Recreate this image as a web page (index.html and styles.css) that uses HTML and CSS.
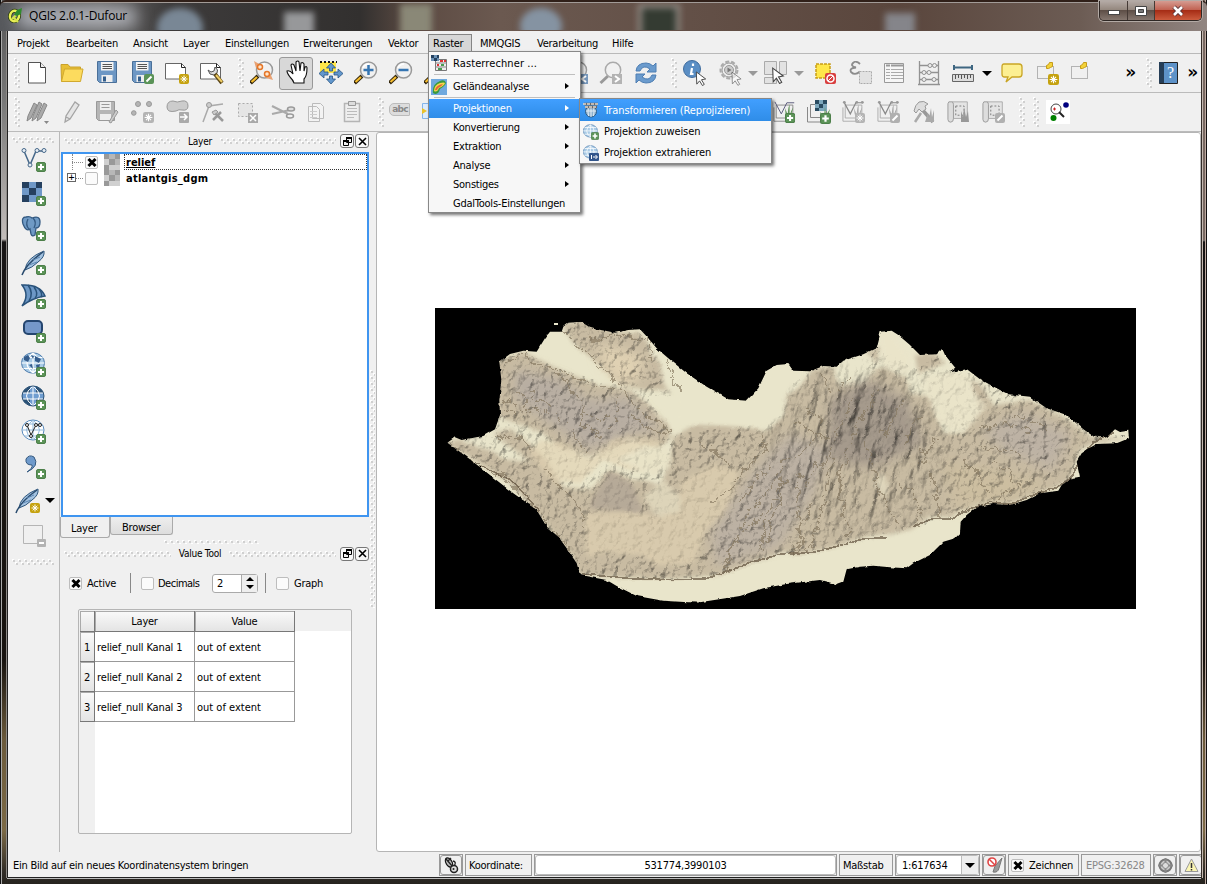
FILE: index.html
```html
<!DOCTYPE html>
<html lang="de">
<head>
<meta charset="utf-8">
<title>QGIS 2.0.1-Dufour</title>
<link rel="stylesheet" href="styles.css">
</head>
<body>
<svg class="defs" width="0" height="0" aria-hidden="true">
  <defs>
    <pattern id="dots-v" width="6" height="6" patternUnits="userSpaceOnUse"><path d="M0 0h2v2H0zM3 3h2v2H3z" fill="#fff"/><path d="M1 1h2v2H1zM4 4h2v2H4z" fill="#d0d0d0"/></pattern>
    <symbol id="plus" viewBox="0 0 10 10"><rect x=".5" y=".5" width="9" height="9" rx="1.5" fill="#5c9458" stroke="#4d7f4a"/><path d="M5 2v6M2 5h6" stroke="#fff" stroke-width="2"/></symbol>
    <symbol id="star" viewBox="0 0 10 10"><rect width="10" height="10" rx="2" fill="#c5a20f"/><path d="M5 1.500v7M1.500 5h7M2.700 2.700l4.600 4.600M7.300 2.700L2.700 7.300" stroke="#fff"/></symbol>
    <symbol id="star-g" viewBox="0 0 10 10"><rect width="10" height="10" rx="2" fill="#b4b4b4"/><path d="M5 1.500v7M1.500 5h7M2.700 2.700l4.600 4.600M7.300 2.700L2.700 7.300" stroke="#fff"/></symbol>
    <symbol id="pen-g" viewBox="0 0 10 10"><rect width="10" height="10" rx="2" fill="#b0b0b0"/><path d="M2.500 7.500l5-5" stroke="#fff" stroke-width="2"/></symbol>
    <symbol id="page" viewBox="0 0 24 24"><path d="M3.500 1.500h12l5 5v15.500h-17z" fill="#fff" stroke="#555"/><path d="M15.500 1.500v5h5" fill="#eee" stroke="#333"/></symbol>
    <symbol id="folder" viewBox="0 0 24 24"><path d="M1.500 20.500l-.5-17h7l2 2.500h10.500v3" fill="#e8bf35" stroke="#caa22c"/><path d="M1.500 20.500l3-12.500h18.500l-2.500 12.500z" fill="#fcdb5e" stroke="#d1a92e"/></symbol>
    <symbol id="disk" viewBox="0 0 24 24"><path d="M1.500.500h19v21h-17l-2-2z" fill="#6d97c4" stroke="#4a7099"/><path d="M5 1h12.500v8.500H5z" fill="#f4f4f4"/><path d="M6.500 3.500h9.500M6.500 5.500h9.500M6.500 7.500h9.500" stroke="#555"/><path d="M5.500 14h11v7h-11z" fill="#eee"/><path d="M7 15.500h3v5H7z" fill="#345f8d"/></symbol>
    <symbol id="disk-g" viewBox="0 0 24 24"><path d="M1.500 1.500h18v19h-16l-2-2z" fill="#b5b5b5" stroke="#999"/><path d="M5 2h11v8H5zM5 14h11v6H5z" fill="#eee"/><path d="M6.500 4.500h8M6.500 7.500h8" stroke="#999"/><path d="M14 22l7-12 2 2-7 11z" fill="#ccc" stroke="#999"/></symbol>
    <symbol id="layout" viewBox="0 0 26 24"><path d="M1.500 2.500h16l4 4v11.500h-20z" fill="#fff" stroke="#666"/><path d="M17.500 2.500v4h4" fill="none" stroke="#222"/></symbol>
    <symbol id="lens" viewBox="0 0 24 24"><path d="M.5 22L8 15" stroke="#30240c" stroke-width="4"/><path d="M1.500 21L7 16" stroke="#f6bd2e" stroke-width="2.200"/><circle cx="14.500" cy="9" r="8" fill="#f1f1f1" stroke="#999" stroke-width="1.500"/><path d="M9 7q2-4 6-4" fill="none" stroke="#fff" stroke-width="1.500"/></symbol>
    <symbol id="lens-g" viewBox="0 0 24 24"><path d="M1.500 22L9 15" stroke="#999" stroke-width="3"/><circle cx="14" cy="9" r="7.700" fill="#f1f1f1" stroke="#aaa" stroke-width="1.500"/></symbol>
    <symbol id="arrow4" viewBox="0 0 24 24"><path d="M12 2l4.500 5h-3v3h-3V7h-3zM12 23l-4.500-5h3v-3h3v3h3zM0 12.500L5 8v3h4v3H5v3zM24 12.500L19 8v3h-4v3h4v3z" fill="#6297cd" stroke="#285583" stroke-width=".8"/></symbol>
    <symbol id="cursor" viewBox="0 0 12 16"><path d="M1 1l10 7.500-4.500.8 3 5-2 1.200-3-5L1.500 14z" fill="#fff" stroke="#444"/></symbol>
    <symbol id="feather" viewBox="0 0 26 26"><path d="M4 20Q5 8 23 1q1 6-6 11-6 6-13 8z" fill="#a3c2e0" stroke="#30577d"/><path d="M1 25Q5 14 22 2" stroke="#294b6e" fill="none" stroke-width="1.500"/><path d="M8 15l8-3M12 10l7-3" stroke="#5b86b3"/></symbol>
    <symbol id="globe" viewBox="0 0 26 24"><ellipse cx="12" cy="11" rx="11.500" ry="10.200" fill="#a9cbe6" stroke="#4e7cac"/><path d="M.5 11h23M2.500 5.500h19M2.500 16.500h19M12 1v20M12 1Q0 11 12 21M12 1Q24 11 12 21" stroke="#fff" fill="none" stroke-width="1.200"/></symbol>
    <symbol id="vmap" viewBox="0 0 26 26"><path d="M1 8v15h15M3.500 5.500h18v14h-18z" stroke="#888" fill="none"/><path d="M2 2l7 13 6-12h8" stroke="#557" fill="none"/><path d="M15 20q-2-7-2-11 2 4 3 8 0-8 2-12v12q2-7 4-9-2 6-3 12z" fill="#5e9256"/><use href="#plus" x="13" y="14" width="11" height="11"/></symbol>
    <symbol id="vmap-g" viewBox="0 0 26 26"><path d="M1 8v15h15M3.500 5.500h18v14h-18z" stroke="#aaa" fill="none"/><path d="M2 2l7 13 6-12h8" stroke="#888" stroke-width="1.300" fill="none"/><circle cx="2.500" cy="2.500" r="1.500" fill="#999"/><circle cx="16" cy="2.500" r="1.500" fill="#999"/><circle cx="22" cy="2.500" r="1.500" fill="#999"/><path d="M15 20q-2-7-2-11 2 4 3 8 0-8 2-12v12q2-7 4-9-2 6-3 12z" fill="#aaa"/></symbol>
    <symbol id="scroll-g" viewBox="0 0 26 26"><path d="M5 2h17v18H5z" fill="#e4e4e4" stroke="#aaa"/><path d="M5 2q-4-1-4 2v17q0 3 3 3 3 0 3-4V5q0-3-2-3z" fill="#ddd" stroke="#999"/><path d="M9.500 6.500h9v10h-9z" fill="none" stroke="#777" stroke-dasharray="2 2"/></symbol>
    <symbol id="checks" viewBox="0 0 16 16"><path d="M0 0h16v16H0z" fill="#d0d0d0"/><path d="M0 0h5v5H0zM11 0h5v5h-5zM5 5h6v6H5zM0 11h5v5H0z" fill="#999"/><path d="M5 0h6v5H5zM11 5h5v6h-5z" fill="#b7b7b7"/></symbol>
  </defs>
</svg>

<div class="window">
  <header class="titlebar">
    <div class="blobs"><i class="blob blob-a"></i><i class="blob blob-b"></i><i class="blob blob-c"></i><i class="blob blob-d"></i><i class="blob blob-e"></i><i class="blob blob-f"></i><i class="blob blob-g"></i></div>
    <svg class="app-icon" width="15" height="15" viewBox="0 0 15 15"><ellipse cx="6.500" cy="8" rx="4.500" ry="5.200" transform="rotate(15 6.500 8)" fill="none" stroke="#273b14" stroke-width="4"/><ellipse cx="6.500" cy="8" rx="4.500" ry="5.200" transform="rotate(15 6.500 8)" fill="none" stroke="#e9ee55" stroke-width="2.500"/><path d="M5 9l5 5M4 11l5-5" stroke="#d5e34b" stroke-width="2.200"/><path d="M6 7l3-5 5-2-1 6-4 2z" fill="#2f8c2e"/></svg>
    <span class="title">QGIS 2.0.1-Dufour</span>
    <div class="caption">
      <span class="cap cap-min"><svg width="14" height="8"><rect x="1.500" y="3.500" width="11" height="4" fill="#fff" stroke="#474747"/></svg></span>
      <span class="cap cap-max"><svg width="12" height="10"><path d="M.5.500h11v9H.500z" fill="#fff" stroke="#444"/><path d="M3.500 3.500h5v3h-5z" fill="#777" stroke="#444"/></svg></span>
      <span class="cap cap-close"><svg width="14" height="12"><path d="M3 2l8 8M11 2L3 10" stroke="#583235" stroke-width="4.500"/><path d="M3 2l8 8M11 2L3 10" stroke="#fff" stroke-width="2.600"/></svg></span>
    </div>
  </header>

  <div class="client">
    <nav class="menubar">
      <span class="m m1">Projekt</span><span class="m m2">Bearbeiten</span><span class="m m3">Ansicht</span><span class="m m4">Layer</span><span class="m m5">Einstellungen</span><span class="m m6">Erweiterungen</span><span class="m m7">Vektor</span>
      <div class="m open"><span class="raster">Raster</span>
        <div class="menu">
          <div class="mi tall first"><svg class="mi-icon" width="16" height="16"><path d="M4.500 4.500h11v11h-11z" fill="#eee" stroke="#777"/><path d="M4 8h12M4 12h12" stroke="#888"/><path d="M0 0h8v6H0z" fill="#6a91b5"/><path d="M0 0h3v3H0zM3 3h3v3H3zM6 0h2v3H6z" fill="#23415f"/><path d="M9 6h3M13 6h2M6 10h2" stroke="#d33" stroke-width="2"/><path d="M10 10h3M7 14h4" stroke="#4a9b50" stroke-width="2"/></svg><span class="wide">Rasterrechner ...</span></div>
          <hr>
          <div class="mi tall"><svg class="mi-icon" width="16" height="16"><path d="M0 0h16v16H0z" fill="#6fa9de"/><path d="M2 14Q1 5 9 2q5-2 6 2-1 3-6 6-2 7-7 4z" fill="#3b9a3e"/><path d="M3 12Q3 6 9 4q4-1 5 0-1 3-6 5-2 5-5 3z" fill="#f5d84c"/><path d="M4 11q1-5 8-6-1 2-5 4-1 3-3 2z" fill="#e5633b"/></svg><span>Geländeanalyse</span><b class="sub"></b></div>
          <hr>
          <div class="mi hot"><span>Projektionen</span><b class="sub"></b>
            <div class="menu submenu">
              <div class="si hot"><svg class="mi-icon" width="16" height="16"><circle cx="8" cy="9.500" r="5.500" fill="#8fb2cf" stroke="#2d5c86"/><path d="M3 9h10M8 4v11M5.500 5q-1 5 0 9M10.500 5q1 5 0 9" stroke="#e5eef5" fill="none"/><path d="M1 2h14M2 5h12" stroke="#6f6a66" stroke-width="2.500"/><path d="M0 2h15M2 5h12" stroke="#ded8d0" stroke-width="1.500" stroke-dasharray="3 1"/></svg><span>Transformieren (Reprojizieren)</span></div>
              <div class="si"><svg class="mi-icon" width="16" height="16"><use href="#globe" width="16" height="15"/><use href="#plus" x="8" y="8" width="8" height="8"/></svg><span>Projektion zuweisen</span></div>
              <div class="si"><svg class="mi-icon" width="16" height="16"><use href="#globe" width="16" height="15"/><rect x="6" y="8" width="10" height="8" rx="1" fill="#31558b"/><path d="M8.500 10v4M10 12h4M12.500 10l2 2-2 2" stroke="#fff" fill="none"/></svg><span>Projektion extrahieren</span></div>
            </div>
          </div>
          <div class="mi"><span>Konvertierung</span><b class="sub"></b></div>
          <div class="mi"><span>Extraktion</span><b class="sub"></b></div>
          <div class="mi"><span>Analyse</span><b class="sub"></b></div>
          <div class="mi"><span>Sonstiges</span><b class="sub"></b></div>
          <div class="mi"><span>GdalTools-Einstellungen</span></div>
        </div>
      </div>
      <span class="m m9">MMQGIS</span><span class="m m10">Verarbeitung</span><span class="m m11">Hilfe</span>
    </nav>

    <div class="toolbar row1">
      <svg class="grip" width="6" height="30"><rect width="6" height="30" fill="url(#dots-v)"/></svg>
      <svg width="24" height="24"><use href="#page"/></svg>
      <svg width="24" height="24"><use href="#folder"/></svg>
      <svg width="24" height="24"><use href="#disk"/></svg>
      <svg width="24" height="24"><use href="#disk"/><rect x="13" y="13" width="10" height="10" rx="2" fill="#5a9357"/><path d="M15.500 20.500l5-5" stroke="#fff" stroke-width="2"/></svg>
      <svg width="26" height="24"><use href="#layout"/><use href="#star" x="15" y="13" width="10" height="10"/></svg>
      <svg width="26" height="24"><use href="#layout"/><path d="M9 9l3 2 3-1 1-4q4 3 2 6l-3 2-4-1z" fill="#ddd" stroke="#555"/><path d="M16 13l7 9" stroke="#5a4515" stroke-width="4"/><path d="M17 14l6 7" stroke="#f0cd63" stroke-width="2"/></svg>
      <svg class="grip" width="6" height="30"><rect width="6" height="30" fill="url(#dots-v)"/></svg>
      <svg width="24" height="24"><use href="#lens"/><path d="M4 0l2 7 5-3zM23 19l-7-2 4-5z" fill="#e8a274"/><circle cx="10" cy="6" r="2.500" fill="#ffe5ca" stroke="#e57629" stroke-width="1.500"/><circle cx="17" cy="13" r="2.500" fill="#ffe5ca" stroke="#e57629" stroke-width="1.500"/></svg>
      <div class="pressed"><svg width="24" height="26"><path d="M10 23q-1-3-4-6-3-4-3-6 3-1 6 3L7 5q1-2 3 0l2 6V2q2-2 3 0l1 9 1-8q2-1 3 1v7l1-4q2-1 2 1 0 8-3 11v4z" fill="#fff" stroke="#111" stroke-width="1.100"/></svg></div>
      <svg width="24" height="24"><path d="M1 1h16v11H1z" fill="#ffe74a"/><path d="M1 1h17" stroke="#111" stroke-width="2" stroke-dasharray="2 2"/><use href="#arrow4"/></svg>
      <svg width="24" height="24"><use href="#lens"/><path d="M14.500 4v10M9.500 9h10" stroke="#3575b2" stroke-width="2.500"/></svg>
      <svg width="24" height="24"><use href="#lens"/><path d="M9.500 9h10" stroke="#3575b2" stroke-width="2.500"/></svg>
      <svg width="24" height="24"><use href="#lens"/></svg>
      <i></i><i></i><i></i>
      <svg width="24" height="24"><use href="#lens"/><path d="M14 13h10v10H14z" fill="#7596ba"/><path d="M22 15l-4 3 4 3" stroke="#fff" stroke-width="2" fill="none"/></svg>
      <svg width="24" height="24"><use href="#lens-g"/><path d="M13 13h10v10H13z" fill="#b3b3b3"/><path d="M16 15l4 3-4 3" stroke="#fff" stroke-width="2" fill="none"/></svg>
      <svg width="24" height="24"><path d="M2 10Q3 2 12 2q4 0 7 3l3-3v9h-9l3-3q-7-5-10 2zM22 14q-1 8-10 8-4 0-7-3l-3 3v-9h9l-3 3q7 5 10-2z" fill="#6b9bcd" stroke="#4f7fb3"/></svg>
      <svg class="grip" width="6" height="30"><rect width="6" height="30" fill="url(#dots-v)"/></svg>
      <svg width="24" height="26"><circle cx="9" cy="9" r="8.500" fill="#5a8ec4" stroke="#416d9e"/><path d="M10 3.500v2.500M9 8l-1 6h2.500" stroke="#fff" fill="none" stroke-width="2.200"/><use href="#cursor" x="12" y="11" width="12" height="15"/></svg>
      <svg width="24" height="26"><circle cx="11" cy="10" r="8.500" fill="#e4e4e4" stroke="#aaa" stroke-width="2" stroke-dasharray="4 2"/><circle cx="11" cy="10" r="7" fill="#eee" stroke="#999"/><circle cx="11" cy="10" r="4.500" fill="#ccc" stroke="#999"/><path d="M9.500 7.500l4 2.500-4 2.500z" fill="#777"/><use href="#cursor" x="13" y="11" width="11" height="15" opacity=".6"/></svg>
      <b class="drop pale"></b>
      <svg width="26" height="26"><path d="M1.500 1.500h12v13h-12zM16.500 1.500h7v13h-7zM1.500 17.500h12v6h-12z" fill="#e2e2e2" stroke="#aaa"/><use href="#cursor" x="8" y="7" width="14" height="17"/></svg>
      <b class="drop pale"></b>
      <svg width="24" height="24"><path d="M3 3h14v14H3z" fill="#ffe74a" stroke="#c79d18" stroke-dasharray="3 1" stroke-width="1.500"/><rect x="12" y="12" width="11" height="11" rx="2" fill="#d93e3e"/><circle cx="17.500" cy="17.500" r="3.500" fill="none" stroke="#fff" stroke-width="1.500"/><path d="M15 20l5-5" stroke="#fff"/></svg>
      <svg width="24" height="24"><path d="M11 3Q7-1 4 2 1 5 7 6.500 0 7 2 11q4 4 9-.500" fill="none" stroke="#8c8c8c" stroke-width="1.800"/><path d="M10.500 10.500h12v12h-12z" fill="#e2e2e2" stroke="#aaa" stroke-dasharray="2 1"/></svg>
      <svg width="24" height="24"><path d="M2.500 2.500h19v19h-19z" fill="#f6f6f6" stroke="#999"/><path d="M4 4.500h4m1 0h12" stroke="#999" stroke-width="2"/><path d="M4 8.500h4m1 0h12M4 11.500h4m1 0h12M4 14.500h4m1 0h12M4 17.500h4m1 0h12" stroke="#aaa"/></svg>
      <svg width="24" height="25"><path d="M2.500 0v23M21.500 0v23M1 23.500h22M3 4.500h19M3 11.500h19M3 18.500h19" stroke="#929292" stroke-width="1.300"/><g fill="#eee" stroke="#929292"><circle cx="13" cy="4.500" r="2"/><circle cx="17.500" cy="4.500" r="2"/><circle cx="7" cy="11.500" r="2"/><circle cx="12" cy="11.500" r="2"/><circle cx="7" cy="18.500" r="2"/><circle cx="17" cy="18.500" r="2"/></g></svg>
      <svg width="24" height="24"><path d="M3 6.500h18M3 4v5M21 4v5" stroke="#3e6681" stroke-width="2"/><path d="M1.500 13.500h21v7h-21z" fill="#ddd" stroke="#666"/><path d="M4.500 14v4M7.500 14v3M10.500 14v4M13.500 14v3M16.500 14v4M19.500 14v3" stroke="#555"/></svg>
      <b class="drop"></b>
      <svg width="24" height="24"><path d="M4 3h15q3 0 3 3v7q0 3-3 3h-7l-6 5 2-5H4q-2 0-2-3V6q0-3 2-3z" fill="#fcef92" stroke="#c9a525" stroke-width="1.300"/></svg>
      <svg width="24" height="24"><path d="M1.500 5.500h16v12h-16z" fill="none" stroke="#777" stroke-dasharray="1 1"/><path d="M10.500 4.500l2-1 1-2h3v4l-2 1-2 1h-2z" fill="#f3d238" stroke="#c59b19"/><use href="#star" x="12" y="13" width="11" height="11"/></svg>
      <svg width="24" height="24"><path d="M2.500 5.500h16v12h-16z" fill="none" stroke="#777" stroke-dasharray="1 1"/><path d="M11.500 4.500l2-1 1-2h3v4l-2 1-2 1h-2z" fill="#f3d238" stroke="#c59b19"/></svg>
      <span class="more">»</span>
      <svg class="grip" width="6" height="30"><rect width="6" height="30" fill="url(#dots-v)"/></svg>
      <svg width="24" height="24"><path d="M2.500 1.500h18v21h-18z" fill="#5d92c8" stroke="#222"/><path d="M2 1h5v21H2z" fill="#263e57"/><text x="10" y="17" class="qmark">?</text></svg>
      <span class="more">»</span>
    </div>

    <div class="toolbar row2">
      <svg class="grip" width="6" height="30"><rect width="6" height="30" fill="url(#dots-v)"/></svg>
      <svg width="26" height="26"><path d="M3 22l1-5 6-13 3 2-6 13zM8 22l1-5 6-14 3 2-6 14zM13 22l1-5 6-13 3 2-6 13z" fill="#aaa" stroke="#888"/><path d="M20 22h5l-2.500 3z" fill="#888"/></svg>
      <svg width="24" height="24"><path d="M5 22l1-6 9-14 4 3-9 14zM6 17l4 2" fill="#e5e5e5" stroke="#a4a4a4" stroke-width="1.300"/></svg>
      <svg width="24" height="24"><use href="#disk-g"/></svg>
      <svg width="24" height="24"><g fill="#b5b5b5" stroke="#999"><circle cx="7" cy="4" r="2.500"/><circle cx="18" cy="4" r="2.500"/><circle cx="2.800" cy="13" r="2.300"/></g><use href="#star-g" x="12" y="12" width="11" height="11"/></svg>
      <svg width="24" height="24"><path d="M1 7Q1 1 7 1q4 2 9 0 6-1 6 5 0 5-6 4-3-1-6 1-9 2-9-4z" fill="#ccc" stroke="#999"/><rect x="13" y="12" width="10" height="11" rx="1" fill="#aaa"/><path d="M14 17h6m-2-3l3 3-3 3" stroke="#fff" stroke-width="1.500" fill="none"/></svg>
      <svg width="24" height="24"><path d="M2 22L8 6l14-2" fill="none" stroke="#aaa" stroke-width="1.500"/><circle cx="8" cy="5" r="2.500" fill="#ccc" stroke="#999"/><path d="M12 20l8-8M13 12l9 9" stroke="#999" stroke-width="2.500"/><path d="M11 12l4-2 2 2-4 3z" fill="#ccc" stroke="#999"/></svg>
      <svg width="24" height="24"><path d="M2.500 3.500h14v13h-14z" fill="#e5e5e5" stroke="#aaa" stroke-dasharray="2 2"/><rect x="12" y="13" width="10" height="10" fill="#a9a9a9"/><path d="M14 15l6 6M20 15l-6 6" stroke="#fff" stroke-width="1.500"/></svg>
      <svg width="26" height="24"><path d="M2 6l16 8M2 14L20 10" stroke="#aaa" stroke-width="2.300"/><ellipse cx="20" cy="16" rx="3.500" ry="2" fill="none" stroke="#999" stroke-width="1.500"/><ellipse cx="21" cy="9" rx="3.500" ry="2" fill="#ddd" stroke="#999" stroke-width="1.500"/></svg>
      <svg width="24" height="24"><path d="M7.500 3.500h8l3 3v12h-11zM3.500 6.500h8l3 3v12h-11z" fill="#f3f3f3" stroke="#bbb"/><path d="M5 11.500h7M5 14.500h7M5 17.500h7" stroke="#ccc"/></svg>
      <svg width="24" height="24"><path d="M4.500 3.500h15v18h-15z" fill="#eee" stroke="#b5b5b5" stroke-width="1.500"/><path d="M8.500 1.500h7v4h-7z" fill="#ddd" stroke="#999"/><path d="M7 8.500h10M7 11.500h10M7 14.500h10M7 17.500h7" stroke="#bbb"/></svg>
      <svg class="grip" width="6" height="30"><rect width="6" height="30" fill="url(#dots-v)"/></svg>
      <span class="abc">abc</span>
      <svg width="24" height="24"><path d="M1.500 3.500h20v15h-20z" fill="#dcecff" stroke="#83b4ea"/><path d="M1 8l5 3-5 3z" fill="#eac22c"/></svg>
      <i></i>
      <svg width="24" height="24"><use href="#vmap"/></svg>
      <svg width="26" height="26"><path d="M1.500 8v15h16M4.500 5.500h16v13h-16z" fill="none" stroke="#888"/><path d="M9 1h12v11H9z" fill="#7da8bd"/><path d="M9 1h4v4H9zM17 1h4v4h-4zM13 5h4v4h-4zM9 9h4v3H9z" fill="#294b60"/><path d="M16 22L14 13l4 4 1-9 1 8 4-6-3 12z" fill="#5e9c55"/><use href="#plus" x="14" y="14" width="11" height="11"/></svg>
      <svg width="24" height="24"><use href="#vmap-g"/><use href="#star-g" x="13" y="13" width="10" height="10"/></svg>
      <svg width="24" height="24"><use href="#vmap-g"/><use href="#pen-g" x="13" y="13" width="10" height="10"/></svg>
      <svg width="24" height="24"><path d="M8 7l13 15" stroke="#999" stroke-width="3.500"/><path d="M2 11q1-6 5-9 5-2 9 2l-3 2 1 3-4 3-3-3-3 4z" fill="#ddd" stroke="#999"/><path d="M13 22l3-9 1 5 2-10 1 9 2-7v12z" fill="#aaa"/><path d="M3 22l6-9" stroke="#aaa" stroke-width="2.500"/></svg>
      <svg width="24" height="24"><use href="#scroll-g"/><path d="M14 22V11l2 6 1-10 2 10 2-6 1 11z" fill="#999"/></svg>
      <svg width="24" height="24"><use href="#scroll-g"/><use href="#pen-g" x="13" y="13" width="10" height="10"/></svg>
      <svg class="grip" width="6" height="30"><rect width="6" height="30" fill="url(#dots-v)"/></svg>
      <svg class="grip" width="6" height="30"><rect width="6" height="30" fill="url(#dots-v)"/></svg>
      <svg class="valuetool" width="24" height="24"><path d="M0 0h24v24H0z" fill="#fff"/><circle cx="10" cy="9" r="5" fill="none" stroke="#444"/><path d="M13 12l5 5" stroke="#222" stroke-width="2"/><path d="M7 9h3M8.500 7.500v3" stroke="#c22"/><circle cx="20" cy="5" r="2.800" fill="#00007f"/><circle cx="7.500" cy="18" r="3" fill="#008000"/></svg>
    </div>

    <main class="body">
      <aside class="layerbar">
        <svg class="hgrip" width="42" height="6"><rect width="42" height="6" fill="url(#dots-v)"/></svg>
        <svg width="26" height="26"><path d="M3 4l6 14 6-14h8" fill="none" stroke="#456789" stroke-width="1.500"/><g fill="#e7eef4" stroke="#456789"><circle cx="3" cy="3.500" r="2"/><circle cx="9" cy="18" r="2"/><circle cx="16" cy="3.500" r="2"/><circle cx="23" cy="3.500" r="2"/></g><use href="#plus" x="15" y="15" width="10" height="10"/></svg>
        <svg width="26" height="26"><path d="M1 1h20v20H1z" fill="#6f98c7"/><path d="M1 1h7v6H1zM15 1h6v6h-6zM8 7h7v7H8zM1 14h7v7H1z" fill="#25405f"/><use href="#plus" x="15" y="15" width="10" height="10"/></svg>
        <svg width="26" height="26"><path d="M2 8Q0 1 5 1q4-1 6 1 8-3 8 4 0 6-4 6l-1 7q-3 2-4-1l-1-5q-4 3-7-5z" fill="#6f9ac5" stroke="#345a82" stroke-width="1.300"/><path d="M7 3q-3 6 1 10M12 2q4 4 1 10" fill="none" stroke="#345a82" stroke-width="1.300"/><use href="#plus" x="15" y="15" width="10" height="10"/></svg>
        <svg width="26" height="26"><use href="#feather"/><use href="#plus" x="15" y="15" width="10" height="10"/></svg>
        <svg width="26" height="26"><path d="M1 1q18-1 23 11-13 2-23 10Q9 11 1 1z" fill="#6d98c6" stroke="#29527a" stroke-width="1.500"/><path d="M7 1q6 8 1 16M13 3q5 7 1 11M18 5q4 5 2 8" fill="none" stroke="#29527a" stroke-width="1.500"/><use href="#plus" x="15" y="15" width="10" height="10"/></svg>
        <svg width="26" height="26"><rect x="3" y="3" width="18" height="13" rx="4" fill="#7598c9" stroke="#25466f" stroke-width="2"/><use href="#plus" x="15" y="15" width="10" height="10"/></svg>
        <svg width="26" height="26"><use href="#globe" width="26" height="24"/><path d="M3 5l4-2 2 3-2 4-4-2zM10 3l3 1-1 3zM14 4l6 3-2 4-4-2zM8 13l3-1 1 5zM15 13l4-1-1 5-2 1z" fill="#355d8c"/><use href="#plus" x="15" y="15" width="10" height="10"/></svg>
        <svg width="26" height="26"><ellipse cx="12" cy="11" rx="11" ry="10" fill="#2c5377"/><path d="M1 8h22v6H1zM9 1h6v20H9z" fill="#6f9dd0"/><path d="M1 8h22M1 14h22M12 1v20M12 1Q-1 11 12 21M12 1q13 10 0 20" fill="none" stroke="#fff"/><ellipse cx="12" cy="11" rx="11" ry="10" fill="none" stroke="#2c5377"/><use href="#plus" x="15" y="15" width="10" height="10"/></svg>
        <svg width="26" height="26"><ellipse cx="12" cy="11" rx="11" ry="10" fill="#fff" stroke="#588abd"/><path d="M1 11h22M3 5h18M3 17h18M12 1v20M12 1Q-1 11 12 21M12 1q13 10 0 20" fill="none" stroke="#94badc"/><path d="M6 6l4 10 5-10h4" fill="none" stroke="#222"/><g fill="#fff" stroke="#222"><circle cx="6" cy="6" r="1.500"/><circle cx="10" cy="17" r="1.500"/><circle cx="15" cy="6" r="1.500"/><circle cx="19" cy="6" r="1.500"/></g><use href="#plus" x="15" y="15" width="10" height="10"/></svg>
        <svg width="26" height="26"><path d="M6 18q6-4 5-7-7 0-6-6 3-5 8-2 6 9-7 15z" fill="#6f9acb" stroke="#365a80"/><use href="#plus" x="15" y="15" width="10" height="10"/></svg>
        <div class="new-layer"><svg width="26" height="26"><use href="#feather"/><use href="#star" x="15" y="15" width="10" height="10"/></svg><b class="drop"></b></div>
        <svg width="26" height="26"><path d="M2.500 2.500h19v18h-19z" fill="#f0f0f0" stroke="#b5b5b5"/><rect x="16" y="16" width="9" height="8" rx="1" fill="#b3b3b3"/><path d="M18 20h5" stroke="#fff" stroke-width="2"/></svg>
        <svg class="hgrip end" width="42" height="6"><rect width="42" height="6" fill="url(#dots-v)"/></svg>
      </aside>

      <section class="docks">
        <div class="dock-title"><svg class="fill" height="6"><rect width="100%" height="6" fill="url(#dots-v)"/></svg><span>Layer</span><svg class="fill" height="6"><rect width="100%" height="6" fill="url(#dots-v)"/></svg><i class="winbtn"><svg width="9" height="9"><path d="M3.500.500h5v5h-5zM.500 3.500h5v5h-5z" fill="#eee" stroke="#000"/><path d="M3 1h6M0 4h6" stroke="#000" stroke-width="2"/></svg></i><i class="winbtn"><svg width="9" height="9"><path d="M1 1l7 7M8 1L1 8" stroke="#000" stroke-width="1.600"/></svg></i></div>
        <div class="tree">
          <div class="node"><i class="branch"></i><i class="check on"></i><svg class="thumb" width="16" height="16"><use href="#checks"/></svg><span class="name current">relief</span></div>
          <div class="node"><i class="branch expand"></i><i class="check"></i><svg class="thumb" width="16" height="16"><use href="#checks"/></svg><span class="name">atlantgis_dgm</span></div>
        </div>
        <div class="tabs"><span class="tab active">Layer</span><span class="tab">Browser</span></div>
        <svg class="split" width="96" height="4"><rect width="96" height="4" fill="url(#dots-v)"/></svg>
        <div class="dock-title second"><svg class="fill" height="6"><rect width="100%" height="6" fill="url(#dots-v)"/></svg><span>Value Tool</span><svg class="fill" height="6"><rect width="100%" height="6" fill="url(#dots-v)"/></svg><i class="winbtn"><svg width="9" height="9"><path d="M3.500.500h5v5h-5zM.500 3.500h5v5h-5z" fill="#eee" stroke="#000"/><path d="M3 1h6M0 4h6" stroke="#000" stroke-width="2"/></svg></i><i class="winbtn"><svg width="9" height="9"><path d="M1 1l7 7M8 1L1 8" stroke="#000" stroke-width="1.600"/></svg></i></div>
        <div class="options">
          <i class="check on"></i><span class="o1">Active</span><i class="vsep"></i>
          <i class="check"></i><span class="o2">Decimals</span>
          <span class="spin"><span>2</span><span class="arrows"><b class="up"></b><b class="down"></b></span></span><i class="vsep s2"></i>
          <i class="check"></i><span class="o3">Graph</span>
        </div>
        <div class="grid-frame">
          <div class="values">
            <span class="h"></span><span class="h">Layer</span><span class="h">Value</span>
            <span class="h">1</span><span class="c">relief_null Kanal 1</span><span class="c">out of extent</span>
            <span class="h">2</span><span class="c">relief_null Kanal 2</span><span class="c">out of extent</span>
            <span class="h">3</span><span class="c">relief_null Kanal 3</span><span class="c">out of extent</span>
          </div>
        </div>
      </section>

      <svg class="vsplit" width="5" height="238"><rect width="5" height="238" fill="url(#dots-v)"/></svg>

      <section class="canvas">
        <svg class="map" width="701" height="301" viewBox="0 0 701 301">
          <defs>
            <clipPath id="isle"><path d="M52 428L75 412 95 420 160 408 195 388 210 345 208 300 214 240 208 185 240 162 280 152 320 155 345 115 360 95 395 95 400 80 415 68 455 65 480 80 505 88 555 98 595 90 630 88 655 115 680 145 715 175 770 220 830 260 895 298 950 302 985 265 1010 212 1040 195 1075 192 1090 212 1140 214 1180 198 1220 200 1240 182 1300 163 1340 143 1352 95 1385 92 1405 105 1440 135 1470 165 1520 163 1537 147 1545 165 1577 205 1560 217 1610 207 1650 238 1700 265 1735 283 1800 290 1850 325 1910 345 1960 388 1992 410 2030 412 2055 388 2070 396 2095 392 2097 415 2060 430 2000 432 1985 440 1955 460 1940 485 1950 530 1925 535 1895 555 1885 572 1830 580 1790 600 1740 615 1690 612 1640 622 1610 645 1592 665 1590 700 1575 715 1540 725 1500 765 1450 790 1430 805 1380 802 1330 797 1290 800 1250 808 1240 845 1220 853 1170 840 1070 852 1000 865 930 888 800 908 700 902 620 888 560 858 530 840 450 825 440 790 410 745 385 710 350 680 320 630 250 580 180 525 110 470z"/></clipPath>
            <radialGradient id="ridge-fade"><stop offset=".55" stop-color="#fff"/><stop offset="1" stop-color="#fff" stop-opacity="0"/></radialGradient>
            <mask id="ridges" maskUnits="userSpaceOnUse" x="0" y="0" width="2160" height="930"><ellipse cx="1290" cy="440" rx="300" ry="290" fill="url(#ridge-fade)"/></mask>
            <filter id="soft" x="-10%" y="-10%" width="120%" height="120%"><feGaussianBlur stdDeviation="7"/></filter>
            <filter id="soft2" x="-30%" y="-30%" width="160%" height="160%"><feGaussianBlur stdDeviation="18"/></filter>
            <filter id="coast" filterUnits="userSpaceOnUse" x="0" y="0" width="2160" height="930">
              <feTurbulence type="fractalNoise" baseFrequency=".05" numOctaves="3" seed="4" result="n"/>
              <feDisplacementMap in="SourceGraphic" in2="n" scale="9" xChannelSelector="R" yChannelSelector="G"/>
            </filter>
            <filter id="valleys" filterUnits="userSpaceOnUse" x="0" y="0" width="2160" height="930">
              <feTurbulence type="fractalNoise" baseFrequency=".03" numOctaves="4" seed="11" result="n"/>
              <feDisplacementMap in="SourceGraphic" in2="n" scale="45" xChannelSelector="R" yChannelSelector="G"/>
            </filter>
            <filter id="relief" x="0" y="0" width="1" height="1" color-interpolation-filters="sRGB">
              <feTurbulence type="fractalNoise" baseFrequency=".032 .014" numOctaves="4" seed="23" result="n"/>
              <feDiffuseLighting in="n" surfaceScale="15" diffuseConstant="1.200" lighting-color="#fff"><feDistantLight azimuth="205" elevation="58"/></feDiffuseLighting>
              <feComposite in2="SourceAlpha" operator="in"/>
            </filter>
            <filter id="relief-fine" x="0" y="0" width="1" height="1" color-interpolation-filters="sRGB">
              <feTurbulence type="fractalNoise" baseFrequency=".045 .04" numOctaves="4" seed="5" result="n"/>
              <feDiffuseLighting in="n" surfaceScale="7" diffuseConstant="1.200" lighting-color="#fff"><feDistantLight azimuth="225" elevation="58"/></feDiffuseLighting>
              <feComposite in2="SourceAlpha" operator="in"/>
            </filter>
          </defs>
          <rect width="701" height="301" fill="#000"/>
          <g transform="translate(-5 -8) scale(.333333)">
            <path d="M371 69h13v5h-13z" fill="#e9e5cb"/>
            <g filter="url(#coast)"><g clip-path="url(#isle)">
              <path d="M0 0h2160v930H0z" fill="#e9e5cb"/>
              <g filter="url(#soft)" fill="#c8bba2">
                <path d="M395 75L455 60 555 98 625 95 655 130 665 170 715 190 720 225 750 285 700 270 640 270 575 255 480 170 430 130z"/>
                <path d="M200 185L280 155 380 205 500 255 600 270 650 310 720 380 725 410 690 440 600 420 480 470 380 440 340 400 290 380 205 350z"/>
                <path d="M45 428L90 418 140 440 180 450 230 480 300 485 240 440 190 400 240 385 310 440 350 480 400 560 480 570 540 505 610 540 640 540 690 555 720 490 730 410 800 370 960 375 1010 395 1060 345 1065 290 1110 260 1150 205 1210 200 1225 255 1300 255 1330 215 1360 200 1430 235 1440 280 1500 290 1540 400 1600 400 1650 330 1620 240 1650 250 1690 315 1800 300 1900 350 1990 415 2090 415 1990 430 1950 450 1920 540 1870 565 1740 610 1660 600 1560 650 1500 650 1440 690 1390 700 1310 710 1200 745 1100 765 1060 755 960 790 870 825 740 837 600 835 450 825 420 760 320 640 240 550 130 480z"/>
                <path d="M1310 155l40-15-10 50zM1455 165l60-5 30 30-40 15-40 15z"/>
              </g>
              <g filter="url(#soft2)">
                <path d="M250 210L390 235 480 300 590 290 690 390 600 400 480 450 390 390 260 300z" fill="#b8aea2"/>
                <path d="M980 500L1080 400 1200 450 1140 600 1050 740 860 800 840 700z" fill="#bcb1a3"/>
                <path d="M1200 300L1310 240 1430 300 1480 430 1330 500 1190 480z" fill="#a59a8c"/>
                <path d="M1660 390l120-50 140 60-50 110-150-60z" fill="#bdb2a4"/>
                <path d="M510 130l130 40-10 70-60 15-60-70z" fill="#e0d1b3"/>
                <path d="M1540 480l200 40 120 30-120 50-160 30z" fill="#ccbea0"/>
              </g>
              <g class="shade">
                <path d="M200 185L280 155 340 185 440 225 520 250 575 255 480 170 430 130 390 75 455 60 555 98 625 95 655 130 715 190 755 285 650 290 725 400 720 440 740 400 960 375 1060 345 1070 270 1150 200 1210 200 1225 255 1300 255 1330 150 1400 170 1460 210 1520 160 1540 210 1620 220 1900 345 1990 410 2090 405 1990 430 1950 450 1920 540 1740 610 1560 650 1440 690 1310 710 1200 745 1060 760 870 825 740 837 450 825 320 640 180 500 45 428 190 405z" filter="url(#relief-fine)"/>
                <g mask="url(#ridges)"><path transform="rotate(14 1290 440)" d="M960 180h640v560H960z" filter="url(#relief)" opacity=".8" class="ridge"/></g>
              </g>
              <g filter="url(#soft)" fill="#e2d3b3" opacity=".65">
                <path d="M330 420l60 10 90 45 80-60 120 5 40 50-40 50-80-10-80-30-70 70-90-10-60-80z"/>
                <path d="M465 640l160-5 60 20 60-50 10-60 100-50 70 20-20 80-30 50-50 50-35 95-110 5-40-30-110-10-60 15z"/>
                <path d="M560 480l80-40 70 0 10 60-60 20zM640 590l60-50 50 50 0 45-70 15z" fill="#e9e2c6"/>
                <path d="M1480 230l80-15 60 10 10 50 40 40-40 55-60 30-50-40-20-60-20-30zM1350 90l40 10 50 70 0 50-80-20zM1330 550l30-30 15 40-10 40z" fill="#ebe4c9"/>
                <path d="M490 590L540 515 605 550 640 640 480 625z" fill="#ada193"/>
              </g>
              <path d="M1170 820l70-70 200-35 60-50 70-15-20 80-100 80-200 0zM540 845l320-5 110-45 110-20 150-25-20 100-280 40-200 20z" fill="#e9e5cb"/>
              <path d="M655 95l120 125 120 78 60 4 60-90 65-20 25 20 30-5-70 75-5 60-60 45-40-5-120-10-80 0-30 35-10-50-25-30-5-40 60 50-50-90-10-60-35-70z" fill="#e9e5cb" filter="url(#soft)"/>
              <g fill="none" stroke="#85775f" stroke-width="3.500" opacity=".65" stroke-linejoin="round" filter="url(#valleys)">
                <path d="M395 85l40 50 40 15 25 50 75 50M480 120h50l10-10h60l20 20 35-10 10 60M715 190l10 40 25 50"/>
                <path d="M208 185l70-20 20 20 80 25 70 30 120 30 60 50 100 85M370 215l50 40 30 60 5 60 40 20 20 20M560 290v80l-20 25M600 350l40 20 80 40M450 340l80 20M380 340l60 70 20 40M230 330l30 20M230 300l70 40M260 280l60 60M300 270l60 70"/>
                <path d="M52 428l50 40 70 40 70 35 50 60 50 55 50 60 50 75M190 410l80 5 30 30M340 500l50 60 60 60 10 60"/>
                <path d="M1070 530l-40 70-30 70 0 50M1060 540l-20 90-50 120M1080 470l-60 100-60 60-40 80-30 100M1000 640l-60 60-60 90M1110 520l-10 60 10 100-20 80M1000 450l-60 60-40 60-60 40M990 400l20 60M880 480l-60-50M840 440l60 60M1090 370l60 20 40 30M1120 320l60 50M1180 220l20 60M1020 500l-100 110M1150 600l-40 90 0 60"/>
                <path d="M1270 290l-30 70-30 60-10 100-20 80-40 160M1330 280l-60 120-40 110 0 80 30 120M1300 420l40 110 20 60 50 90M1400 540l40 30 30 60-10 50M1500 520l20 60 10 70M1600 480l60 60 20 55M1680 480l60 40 20 40-50 40M1350 260l-60 110M1420 290l-60 120M1470 340l-50 100M1520 420l-60 70M1640 390l80-20 90 30M1660 440l120 20M1750 340l110 50M1100 480l70-70M1130 560l60-100M1260 220l-30 50"/>
              </g>
              <g fill="none" stroke="#665743" stroke-width="5" opacity=".7" stroke-linejoin="round"><path d="M455 822l150 14 140 3 80-2 60-20 80-30 90-25 55-5M1080 762l70-5 60-15 90-25 70-4M1450 680l60-25 50 2 60-30 60-20 60 6 70-28 70-22 45-30 25-55 40-50 60-30-70-55-80-30-90-35"/><path d="M120 480l70 35 60 30 80 90" stroke-width="4"/></g>
            </g></g>
          </g>
        </svg>
      </section>
    </main>

    <footer class="status">
      <span class="msg">Ein Bild auf ein neues Koordinatensystem bringen</span>
      <span class="box b1"><i class="tb"><svg width="17" height="17"><ellipse cx="6" cy="5.500" rx="3" ry="5" transform="rotate(-30 6 5.500)" fill="#bbb" stroke="#111" stroke-width="1.300"/><path d="M3 2l7 8M8 1l-3 3M10 4q4 1 1 5" fill="none" stroke="#222" stroke-width="1.300"/><circle cx="11" cy="12" r="3.500" fill="#ddd" stroke="#222" stroke-width="1.500"/><circle cx="10.500" cy="12" r="1" fill="#222"/></svg></i></span>
      <span class="box b2">Koordinate:</span>
      <span class="box b3"><span class="field">531774,3990103</span></span>
      <span class="box b4">Maßstab</span>
      <span class="box b5"><span class="combo"><span>1:617634</span><i><b class="drop"></b></i></span></span>
      <span class="box b6"><i class="tb"><svg width="17" height="17"><path d="M16 1l-7 8-2 6q5 1 6-4z" fill="#999" stroke="#777"/><circle cx="6" cy="5" r="4" fill="#fff" stroke="#df4444" stroke-width="1.600"/><path d="M3 2l6 6" stroke="#df4444" stroke-width="1.500"/></svg></i></span>
      <span class="box b7"><i class="check on"></i>Zeichnen</span>
      <span class="box b8">EPSG:32628</span>
      <span class="box b9"><i class="tb"><svg width="17" height="17"><circle cx="8.500" cy="8.500" r="6" fill="#ccc" stroke="#777" stroke-width="2"/><path d="M1 8.500h15M8.500 1v15" stroke="#888" stroke-width="2"/><circle cx="8.500" cy="8.500" r="3" fill="#ddd" stroke="#888"/></svg></i></span>
      <span class="box b10"><i class="tb"><svg width="17" height="17"><path d="M8.500 2l6.500 12.500H2z" fill="#fbf6b3" stroke="#999"/><path d="M8.500 6v5M8.500 12v1.500" stroke="#333" stroke-width="1.500"/></svg></i></span>
    </footer>
  </div>
</div>
</body>
</html>
```

FILE: styles.css
```css
* { box-sizing: border-box; }
body { margin: 0; background: #000; font-family: "DejaVu Sans Condensed", "DejaVu Sans", sans-serif; font-stretch: condensed; font-size: 11px; letter-spacing: -0.24px; color: #000; line-height: 13px; }
svg { display: block; flex: none; }
.defs { position: absolute; }
i { font-style: normal; }

/* window frame */
.window { width: 1207px; height: 884px; overflow: hidden; position: relative; display: grid; grid-template: 31px 847px / 1194px; padding: 0 0 6px 7px;
  background: linear-gradient(90deg, #111 0 1px, #a9a9a9 1px 2px, transparent 2px 1205px, #bda9a0 1205px 1206px, #111 1206px),
    linear-gradient(90deg, transparent 0 1100px, #786962 1100px) 0 0 / 100% 240px no-repeat,
    linear-gradient(180deg, #555 0, #777 100px, #c2bdba 239px, #171515 242px, #17130f 660px, #6b5a3b 740px, #7c6a46 830px, #302c27 872px, #26231e 884px); }
.titlebar { grid-column: 1; margin: 0 -6px 0 -7px; display: flex; position: relative; border-top: 2px solid #302019; border-radius: 6px 6px 0 0;
  background: linear-gradient(180deg, #a29b97 0 1px, transparent 1px), linear-gradient(90deg, #56585c 0, #666 100px, #3d3b3b 170px, #32302f 360px, #5b4a42 410px, #6b5950 500px, #5a463d 900px, #6c5c54 1080px, #918581 1207px); }
.blobs { position: absolute; inset: 1px 0 1px; overflow: hidden; }
.blob { position: absolute; filter: blur(3px); }
.blob-a { left: 18px; top: 4px; width: 118px; height: 20px; background: rgba(205, 208, 216, .75); filter: blur(8px); }
.blob-b { left: 157px; top: 5px; width: 46px; height: 40px; border-radius: 50%; background: #798795; }
.blob-c { left: 284px; top: 9px; width: 30px; height: 30px; background: #97989a; }
.blob-d { left: 400px; top: 1px; width: 32px; height: 40px; background: #8a8877; }
.blob-e { left: 520px; top: 5px; width: 42px; height: 36px; border-radius: 50%; background: #8593a2; }
.blob-f { left: 642px; top: 5px; width: 34px; height: 40px; background: #343b32; box-shadow: 0 0 0 4px #948d87; }
.blob-g { left: 885px; top: 10px; width: 30px; height: 30px; background: #85858a; }
.app-icon { position: relative; margin: 6px 0 0 8px; }
.title { position: relative; margin: 6px 0 0 6px; font: 12px/15px "Open Sans", "Noto Sans", sans-serif; letter-spacing: -0.2px; }
.caption { position: relative; margin: -1px 5px 0 auto; width: 103px; height: 20px; display: flex; border: 1px solid #2e2724; border-top: 0; border-radius: 0 0 5px 5px; overflow: hidden; box-shadow: 0 0 0 1px #b3aaa5; }
.cap { display: flex; align-items: center; justify-content: center; background: linear-gradient(#b4aaa5, #95887f 45%, #5e4f47 50%, #85776f); border-right: 1px solid #453a35; }
.cap-min { width: 28px; } .cap-max { width: 27px; }
.cap-close { flex: 1; border: 0; background: linear-gradient(#d59b91, #c26454 45%, #a62d16 50%, #cc5c3e); }

.client { grid-column: 1; background: #f0f0f0; border: 1px solid #222; border-width: 0 0 1px 1px; box-shadow: -1px 0 #8e8b88, 0 -1px #24201e, 0 -2px #a9a19d, 0 1px #bbb, 1px 0 #332c28, 2px 0 #c4b9b1; display: grid; grid-template-rows: 23px 39px 39px 720px 25px; }

/* menu bar */
.menubar { display: flex; border-bottom: 1px solid #b9b9b9; padding-left: 9px; align-items: center; }
.m { white-space: nowrap; flex: none; padding-top: 2px; }
.m1 { width: 49px; } .m2 { width: 67px; } .m3 { width: 50px; } .m4 { width: 42px; } .m5 { width: 78px; } .m6 { width: 85px; } .m7 { width: 40px; }
.m9 { width: 57px; } .m10 { width: 75px; }
.open { position: relative; width: 44px; height: 18px; margin-right: 8px; align-self: flex-start; margin-top: 3px; background: #d7d7d7; border: 1px solid #858585; padding: 2px 0 0 4px; }
.menu { position: absolute; z-index: 5; left: -1px; top: 16px; width: 153px; height: 162px; border: 1px solid #888; background: #f7f7f7; box-shadow: 2px 2px 3px rgba(0, 0, 0, .55); }
.menu hr { border: 0; height: 1px; background: #bfbfbf; margin: 0 5px 1px; }
.mi { position: relative; height: 19px; padding-left: 24px; display: flex; align-items: center; justify-content: space-between; }
.wide { letter-spacing: .1px; }
.tall { height: 21px; }
.tall.first { height: 22px; }
.mi > .mi-icon { position: absolute; left: 2px; top: 3px; }
.hot { background: linear-gradient(#419fff, #2f8de8); color: #fff; }
.sub { width: 0; border: 3px solid transparent; border-left: 4px solid currentColor; border-right: 0; margin: -2px 11px 0 0; }
.submenu { left: 150px; top: -1px; width: 193px; height: 66px; color: #000; letter-spacing: -.1px; }
.si { display: flex; align-items: center; height: 21px; gap: 5px; padding-left: 3px; }
.si.hot { color: #fff; height: 22px; }

/* toolbars */
.toolbar { display: grid; align-items: center; justify-items: center; border-bottom: 1px solid #bbb; overflow: hidden; }
.row1 { grid-template-columns: 12px 34px 36px 35px 35px 34px 35px 15px 35px 34px 35px 35px 35px 35px 35px 35px 35px 35px 35px 35px 14px 35px 35px 11px 36px 10px 41px 31px 36px 34px 34px 13px 37px 36px 30px 40px 16px 33px 16px; }
.row2 { grid-template-columns: 12px 34px 35px 36px 35px 35px 35px 35px 35px 34px 35px 15px 31px 36px 316px 35px 34px 35px 35px 35px 35px 35px 14px 14px 37px; }
.grip { justify-self: end; }
.pressed { width: 34px; height: 33px; display: grid; place-items: center; background: #d8d8d8; border: 1px solid #999; border-radius: 3px; }
.drop { width: 0; height: 0; border: 5px solid transparent; border-top-color: #000; border-bottom: 0; }
.drop.pale { border-top-color: #999; }
.more { font: bold 17px/17px "DejaVu Sans", sans-serif; justify-self: end; padding-right: 0; margin-top: -2px; }
.row1 .more:last-child { padding-right: 3px; }
.qmark { font: 16px "Liberation Serif", serif; fill: #fff; }
.abc { font: bold 9px/10px "DejaVu Sans", sans-serif; letter-spacing: -.8px; color: #888; background: #ddd; border: 1px solid #bbb; border-radius: 5px 1px 1px 5px; padding: 0 1px 1px 2px; margin-top: -5px; }

/* body */
.body { display: grid; grid-template-columns: 52px 309px 7px 825px; }
.layerbar { border-right: 1px solid #b9b9b9; display: grid; grid-template-rows: 6px 34px 34px 35px 34px 34px 34px 33px 34px 34px 35px 34px 35px 12px; padding-top: 5px; justify-items: center; align-items: center; height: 720px; align-content: start; }
.hgrip { margin-left: -1px; }
.hgrip.end { align-self: end; }
.new-layer { position: relative; margin-left: -12px; }
.new-layer .drop { position: absolute; left: 30px; top: 10px; }
.docks { display: flex; flex-direction: column; padding-left: 1px; }
.dock-title { height: 20px; flex: none; display: flex; align-items: center; padding: 0 0 2px 3px; font-size: 10px; }
.dock-title .fill { flex: 1 1 0; width: 0; min-width: 0; }
.dock-title span { padding: 0 8px; }
.winbtn { width: 14px; height: 14px; border: 1px solid #777; border-radius: 3px; display: grid; place-items: center; margin-left: 1px; background: #f8f8f8; }
.dock-title .fill + .winbtn { margin-left: 4px; }
.tree { height: 365px; flex: none; border: 2px solid #3f95f0; background: #fff; font-weight: bold; }
.node { height: 16px; display: flex; align-items: center; }
.branch { width: 20px; height: 16px; flex: none; position: relative; }
.branch::before { content: ""; position: absolute; left: 9px; top: 8px; width: 11px; border-top: 1px dotted #888; }
.branch::after { content: ""; position: absolute; left: 9px; top: 0; height: 16px; border-left: 1px dotted #888; }
.expand::after { content: "+"; box-sizing: border-box; left: 4px; top: 3px; width: 9px; height: 9px; border: 1px solid #666; background: #fff; font: 10px/7px "DejaVu Sans Mono", monospace; text-align: center; letter-spacing: 0; }
.check { width: 13px; height: 13px; flex: none; border: 1px solid #bdbdbd; border-radius: 2px; background: #fbfbfb; position: relative; }
.check.on::before, .check.on::after { content: ""; position: absolute; left: 1px; top: 4px; width: 10px; height: 3px; background: #000; transform: rotate(45deg); }
.check.on::after { transform: rotate(-45deg); }
.branch + .check { margin-left: 2px; margin-right: 6px; }
.name { margin-left: 4px; padding-left: 2px; height: 16px; line-height: 18px; flex: 1; font-size: 11px; letter-spacing: .25px; }
.current { border: 1px dotted #333; text-decoration: underline; line-height: 16px; padding-left: 1px; letter-spacing: 0; }
.tabs { display: flex; height: 21px; flex: none; align-items: flex-start; margin-left: -1px; }
.tab { height: 18px; padding: 4px 10px 0 11px; border: 1px solid #aaa; border-top: 0; border-radius: 0 0 3px 3px; background: linear-gradient(#eee, #ddd); width: 63px; line-height: 13px; }
.tab.active { height: 21px; width: 50px; background: #f0f0f0; padding: 5px 0 0 10px; }
.split { margin: 2px 0 0 103px; }
.dock-title.second { height: 21px; }
.options { display: flex; height: 24px; flex: none; margin: 6px 0 0 8px; align-items: center; }
.options > span:not(.spin) { margin-left: 5px; }
.options > .o2 { letter-spacing: -.5px; margin-left: 4px !important; }
.o1 { width: 43px; } .o2 { width: 54px; }
.vsep { height: 20px; border-left: 1px solid #888; margin-right: 10px; }
.options .spin { width: 46px; height: 19px; border: 1px solid #aaa; border-radius: 3px; background: #fff; display: flex; justify-content: space-between; padding-left: 4px; align-items: center; }
.arrows { height: 17px; width: 16px; background: #eee; border-left: 1px solid #aaa; display: flex; flex-direction: column; justify-content: space-around; align-items: center; }
.up, .down { border: 4px solid transparent; border-bottom-color: #000; border-top: 0; }
.down { border-top: 4px solid #000; border-bottom: 0; }
.vsep.s2 { margin-left: 7px; }
.grid-frame { margin: 14px 17px 0 17px; height: 225px; border: 1px solid #b5b5b5; border-radius: 2px; background: linear-gradient(#f0f0f0 21px, transparent 21px), linear-gradient(90deg, #f0f0f0 16px, #fff 16px); padding: 1px; }
.values { display: grid; grid-template: 21px 30px 30px 30px / 15px 100px 100px; }
.values span { display: flex; align-items: center; border-right: 1px solid #999; border-bottom: 1px solid #999; }
.values .h { justify-content: center; background: linear-gradient(#fafafa, #e4e4e4); border-color: #777; box-shadow: inset 1px 1px #aaa; padding-top: 1px; }
.values .c { padding: 1px 0 0 2px; background: #fff; letter-spacing: -.14px; }
.values .c:nth-child(3n) { letter-spacing: 0; }
.vsplit { margin: 238px 0 0 1px; }
.canvas { border: 1px solid #b5b5b5; border-radius: 3px; background: #fff; height: 720px; padding: 175px 0 0 58px; }
.map { shape-rendering: crispEdges; }
.shade { mix-blend-mode: multiply; opacity: .8; }
.ridge { mix-blend-mode: multiply; }

/* status bar */
.status { display: flex; align-items: flex-start; padding: 2px 0 0 5px; white-space: nowrap; overflow: hidden; }
.msg { width: 426px; padding-top: 5px; flex: none; }
.box { height: 22px; flex: none; border: 1px solid #999; margin-right: 2px; display: flex; align-items: center; }
.b1, .b6, .b9, .b10 { width: 24px; }
.b2 { width: 67px; padding-left: 3px; } .b3 { width: 303px; } .b4 { width: 54px; padding-left: 3px; } .b5 { width: 85px; }
.b7 { width: 71px; gap: 5px; padding-left: 2px; } .b8 { width: 70px; padding-left: 4px; color: #888; }
.tb { width: 22px; height: 20px; border: 1px solid #999; border-radius: 3px; display: grid; place-items: center; }
.field { flex: 1; height: 20px; border: 1px solid #bbb; border-radius: 3px; background: #fff; text-align: center; line-height: 20px; letter-spacing: -.2px; }
.combo { flex: 1; height: 20px; border: 1px solid #bbb; border-radius: 3px; background: #fff; display: flex; align-items: center; justify-content: space-between; padding-left: 5px; }
.combo i { width: 17px; height: 18px; background: #eee; border-left: 1px solid #bbb; display: grid; place-items: center; }
```
